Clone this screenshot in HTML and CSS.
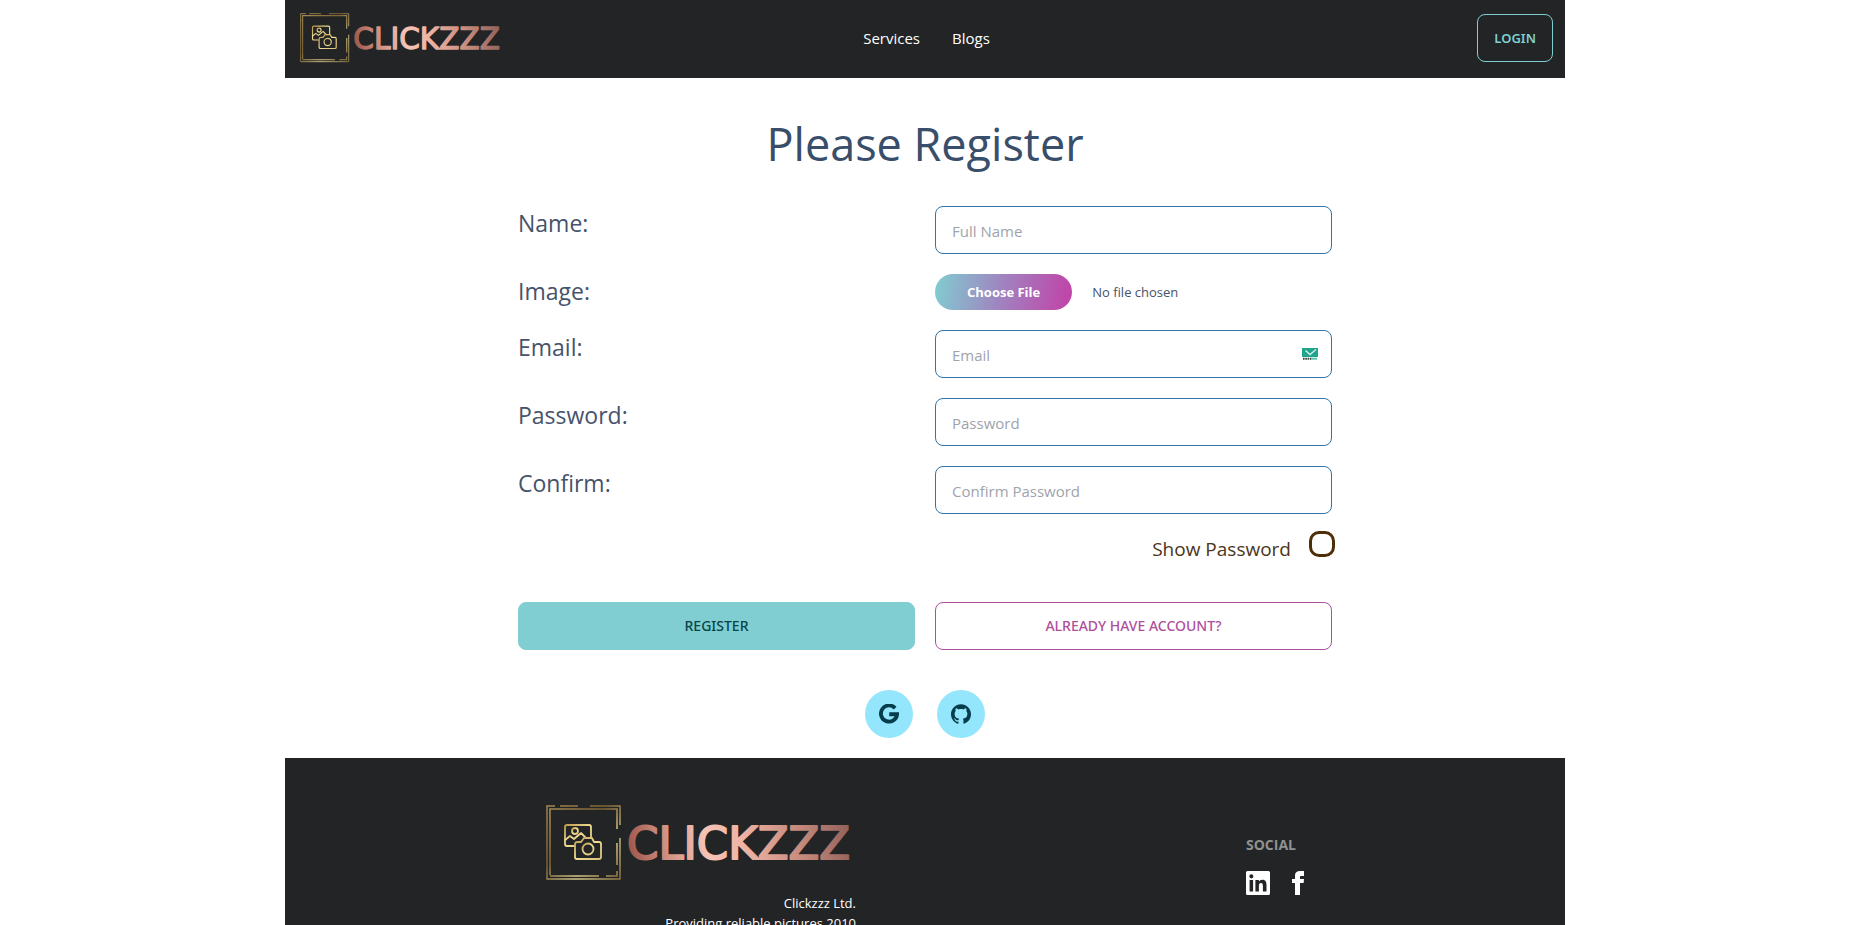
FILE: index.html
```html
<!DOCTYPE html>
<html lang="en">
<head>
<meta charset="utf-8">
<meta name="viewport" content="width=device-width, initial-scale=1">
<title>Clickzzz | Register</title>
<link rel="stylesheet" href="styles.css">
</head>
<body>
<svg class="defs" aria-hidden="true">
  <defs>
    <linearGradient id="gold" x1="0" y1="0" x2="1" y2="1">
      <stop offset="0" stop-color="#a58a55"/><stop offset=".4" stop-color="#7d6233"/><stop offset=".7" stop-color="#d9c787"/><stop offset="1" stop-color="#8f7745"/>
    </linearGradient>
    <linearGradient id="gold-icon" x1="0" y1="0" x2="1" y2="1">
      <stop offset="0" stop-color="#c09a4c"/><stop offset=".5" stop-color="#f0dc95"/><stop offset="1" stop-color="#d8c078"/>
    </linearGradient>
    <linearGradient id="rose" gradientUnits="userSpaceOnUse" x1="83" y1="60" x2="306" y2="20">
      <stop offset="0" stop-color="#9b5348"/><stop offset=".17" stop-color="#cf8f80"/><stop offset=".35" stop-color="#f6c3b5"/><stop offset=".5" stop-color="#efb5a6"/><stop offset=".75" stop-color="#c88c7f"/><stop offset="1" stop-color="#8f5f58"/>
    </linearGradient>
  </defs>
  <symbol id="logo" viewBox="0 0 310 76">
    <g fill="none" stroke="url(#gold)">
      <path stroke-width="1.4" d="M1 12V1H9M14 1H32M44 1H74V20M74 33V74H1V10"/>
      <path stroke-width="1.6" d="M4 70V4H71V24M71 38V60M71 66V71H60M53 71H4"/>
    </g>
    <g fill="none" stroke="url(#gold-icon)" stroke-width="1.8" stroke-linejoin="round" stroke-linecap="round">
      <path d="M28 41H21Q19 41 19 39V22Q19 20 21 20H43Q45 20 45 22V32"/>
      <circle cx="29" cy="26" r="3"/>
      <path d="M19 35L24 31L28 34L35 28L40 33"/>
      <path d="M32 37H35L38 33H46L48 37H53Q55 37 55 39V52Q55 54 53 54H31Q29 54 29 52V39Q29 37 32 37Z"/>
      <circle cx="42" cy="44" r="5.5"/>
    </g>
    <text class="logo-text" x="81" y="54">CLICKZZZ</text>
  </symbol>
</svg>
<div class="page">
  <header class="navbar">
    <a class="navbar-brand" href="#" aria-label="Clickzzz home"><svg class="logo-small"><use href="#logo"/></svg></a>
    <nav class="navbar-links">
      <a href="#">Services</a>
      <a href="#">Blogs</a>
    </nav>
    <div class="navbar-end"><a class="btn btn-login" href="#">LOGIN</a></div>
  </header>

  <main class="register">
    <h1>Please Register</h1>
    <form class="form">
      <label for="name">Name:</label>
      <input class="field" id="name" type="text" placeholder="Full Name">
      <label for="image">Image:</label>
      <input class="file" id="image" type="file">
      <label for="email">Email:</label>
      <div class="email-wrap">
        <input class="field" id="email" type="email" placeholder="Email">
        <svg class="mail-icon" viewBox="0 0 16 12" aria-hidden="true">
          <path fill="#22a38b" d="M0 0H16V9H0Z"/>
          <path fill="none" stroke="#d4f3ec" stroke-width="1.4" d="M3.5 2.5L8 6.5L14 1.5"/>
          <path stroke="#33443f" stroke-width="2" stroke-dasharray="1.6 .7" d="M1 10.7H9"/>
          <path stroke="#5cc4ae" stroke-width="2" d="M9 10.7H15"/>
        </svg>
      </div>
      <label for="password">Password:</label>
      <input class="field" id="password" type="password" placeholder="Password">
      <label for="confirm">Confirm:</label>
      <input class="field" id="confirm" type="password" placeholder="Confirm Password">
      <div class="show-row">
        <label for="show">Show Password</label>
        <input class="check" id="show" type="checkbox">
      </div>
      <button class="btn btn-primary" type="submit">REGISTER</button>
      <button class="btn btn-secondary" type="button">ALREADY HAVE ACCOUNT?</button>
    </form>
    <div class="providers">
      <button class="circle" type="button" aria-label="Continue with Google">
        <svg viewBox="0 0 24 24"><path fill="none" stroke="currentColor" stroke-width="4.6" d="M19.3 5A9.7 9.7 0 1 0 21.7 12.3H12.3"/></svg>
      </button>
      <button class="circle" type="button" aria-label="Continue with GitHub">
        <svg viewBox="0 0 24 24"><path fill="currentColor" d="M12 .297c-6.63 0-12 5.373-12 12 0 5.303 3.438 9.8 8.205 11.385.6.113.82-.258.82-.577 0-.285-.01-1.04-.015-2.04-3.338.724-4.042-1.61-4.042-1.61C4.422 18.07 3.633 17.7 3.633 17.7c-1.087-.744.084-.729.084-.729 1.205.084 1.838 1.236 1.838 1.236 1.07 1.835 2.809 1.305 3.495.998.108-.776.417-1.305.76-1.605-2.665-.3-5.466-1.332-5.466-5.93 0-1.31.465-2.38 1.235-3.22-.135-.303-.54-1.523.105-3.176 0 0 1.005-.322 3.3 1.23.96-.267 1.98-.399 3-.405 1.02.006 2.04.138 3 .405 2.28-1.552 3.285-1.23 3.285-1.23.645 1.653.24 2.873.12 3.176.765.84 1.23 1.91 1.23 3.22 0 4.61-2.805 5.625-5.475 5.92.42.36.81 1.096.81 2.22 0 1.606-.015 2.896-.015 3.286 0 .315.21.69.825.57C20.565 22.092 24 17.592 24 12.297c0-6.627-5.373-12-12-12"/></svg>
      </button>
    </div>
  </main>

  <footer class="footer">
    <div class="footer-brand">
      <svg class="logo-large" role="img" aria-label="Clickzzz"><use href="#logo"/></svg>
      <p>Clickzzz Ltd.<br>Providing reliable pictures 2010</p>
    </div>
    <div class="footer-social">
      <span class="footer-title">SOCIAL</span>
      <div class="social-links">
        <a href="#" aria-label="LinkedIn"><svg viewBox="0 0 24 24"><path fill="currentColor" fill-rule="evenodd" d="M1.5 0H22.5Q24 0 24 1.500V22.500Q24 24 22.500 24H1.500Q0 24 0 22.500V1.500Q0 0 1.500 0ZM3.600 9V20.400H7.100V9ZM5.350 3.300A2.050 2.050 0 1 0 5.350 7.400A2.050 2.050 0 1 0 5.350 3.300ZM9.400 9V20.400H12.900V14.800C12.900 13.200 13.400 11.900 15 11.900S16.900 13.300 16.900 14.900V20.400H20.500V14.200C20.500 10.900 19.600 8.700 16.400 8.700C14.700 8.700 13.500 9.600 12.900 10.600V9Z"/></svg></a>
        <a href="#" aria-label="Facebook"><svg viewBox="0 0 24 24"><path fill="currentColor" d="M9 8h-3v4h3v12h5v-12h3.642l.358-4h-4v-1.667c0-.955.192-1.333 1.115-1.333h2.885v-5h-3.808c-3.596 0-5.192 1.583-5.192 4.615v3.385z"/></svg></a>
      </div>
    </div>
  </footer>
</div>
</body>
</html>
```
FILE: styles.css
```css
* { box-sizing: border-box; }
body {
  margin: 0;
  background: #fff;
  color: #394e6a;
  font: 15px/24px "Open Sans", "Noto Sans", sans-serif;
}
a { color: inherit; text-decoration: none; }
h1, p { margin: 0; }
button, input { font: inherit; }
.defs { position: absolute; width: 0; height: 0; }
.page { max-width: 1280px; margin: 0 auto; }

.logo-text {
  font: 400 45px "DejaVu Sans", sans-serif;
  fill: url(#rose);
  stroke: url(#rose);
  stroke-width: 2;
  stroke-linejoin: round;
}

.navbar {
  display: grid;
  grid-template-columns: 1fr auto 1fr;
  align-items: center;
  padding: 13px 12px 15px 15px;
  background: #222426;
  color: #fff;
}
.navbar-brand { display: flex; }
.logo-small { width: 204px; height: 50px; }
.navbar-links { display: flex; gap: 32px; }
.navbar-end { display: flex; justify-content: flex-end; }

.btn {
  display: flex;
  align-items: center;
  justify-content: center;
  height: 48px;
  padding: 0 16px;
  border: 1px solid;
  border-radius: 8px;
  background: none;
  font-family: "Noto Sans", "Open Sans", sans-serif;
  font-size: 14px;
  font-weight: 500;
  cursor: pointer;
}
.btn-login { color: #7fcfd1; font-size: 13px; font-weight: 600; }
.btn-primary { background: #80ced1; border-color: #80ced1; color: #07454b; }
.btn-secondary { color: #af4f9b; }

.register { padding: 38px 16px 20px; }
h1 { font-size: 45px; font-weight: 400; line-height: 56px; text-align: center; }
.form {
  display: grid;
  grid-template-columns: 1fr 1fr;
  gap: 20px;
  max-width: 814px;
  margin: 34px auto 40px;
}
.form > label { font-size: 23px; line-height: 34px; color: #46536a; }
.field {
  width: 100%;
  height: 48px;
  padding: 2px 16px 0;
  border: 1px solid #2f75ae;
  border-radius: 8px;
  background: #fff;
  color: #394e6a;
}
.field::placeholder { color: #a0a3ab; opacity: 1; }
.email-wrap { position: relative; }
.mail-icon { position: absolute; right: 14px; top: 18px; width: 16px; height: 12px; }
.file { width: 100%; height: 36px; font-size: 13px; line-height: 36px; color: #46536a; }
.file::file-selector-button {
  height: 36px;
  margin: 0 20px 0 0;
  padding: 0 32px;
  border: 0;
  border-radius: 18px;
  background: linear-gradient(100deg, #80ced1, #a181bf 50%, #bf47a9 95%);
  color: #fff;
  font: 700 13px "Open Sans", "Noto Sans", sans-serif;
}
.show-row {
  grid-column: 1 / -1;
  display: flex;
  justify-content: flex-end;
  gap: 18px;
  height: 48px;
  margin-right: -3px;
  color: #4a3520;
}
.show-row label { font-size: 19px; line-height: 30px; }
.check {
  appearance: none;
  width: 26px;
  height: 26px;
  margin: -3px 0 0;
  border: 3px solid #4f2d06;
  border-radius: 10px;
}
.providers { display: flex; justify-content: center; gap: 24px; }
.circle {
  display: grid;
  place-items: center;
  width: 48px;
  height: 48px;
  padding: 0;
  border: 0;
  border-radius: 50%;
  background: #93e6fb;
  color: #053d4c;
}
.circle svg { width: 20px; height: 20px; }

.footer {
  display: flex;
  justify-content: space-around;
  padding: 47px 60px 40px 66px;
  background: #222426;
  color: #fff;
  font-size: 13px;
  line-height: 20px;
}
.footer-brand { text-align: right; }
.logo-large { display: block; width: 310px; height: 76px; margin-bottom: 12px; }
.footer-social { padding-top: 30px; }
.footer-title { color: #909192; font-size: 14px; font-weight: 700; }
.social-links { display: flex; gap: 16px; margin-top: 16px; }
.social-links svg { display: block; width: 24px; height: 24px; }
```
